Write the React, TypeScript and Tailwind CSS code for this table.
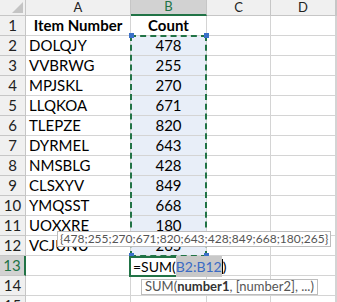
const rows: [string, number][] = [
  ['DOLQJY', 478],
  ['VVBRWG', 255],
  ['MPJSKL', 270],
  ['LLQKOA', 671],
  ['TLEPZE', 820],
  ['DYRMEL', 643],
  ['NMSBLG', 428],
  ['CLSXYV', 849],
  ['YMQSST', 668],
  ['UOXXRE', 180],
  ['VCJUNU', 265]
];

const cell = 'border-r border-b border-[#d4d4d4] overflow-hidden whitespace-nowrap';
const head = 'border-r border-b border-[#c6c6c6] bg-[#f0f0f0] flex items-center justify-center text-[13px] text-[#222]';

function RowHead({ n, active }: { n: number; active?: boolean }) {
  if (active) {
    return (
      <div className="flex items-center justify-center border-b border-r-2 border-b-[#c6c6c6] border-r-[#217346] bg-[#d2d2d2] text-[15px] text-[#217346]">
        {n}
      </div>
    );
  }
  return <div className={`${head} !text-[15px]`}>{n}</div>;
}

export default function App() {
  return (
    <div className="relative h-[302px] w-[337px] overflow-hidden bg-white font-['Lato',sans-serif] text-black">
      <div className="grid grid-cols-[26px_105px_76px_64px_65px_1fr] grid-rows-[16px_repeat(15,20px)]">
        {/* column headers */}
        <div className={`${head} relative`}>
          <div className="absolute bottom-[2px] right-[2px] h-0 w-0 border-b-[11px] border-l-[11px] border-b-[#c4c4c4] border-l-transparent" />
        </div>
        <div className={head}>A</div>
        <div className="flex items-center justify-center border-b-2 border-r border-b-[#217346] border-r-[#c6c6c6] bg-[#d2d2d2] text-[13px] text-[#217346]">
          B
        </div>
        <div className={head}>C</div>
        <div className={head}>D</div>
        <div className={head} />

        {/* row 1 */}
        <RowHead n={1} />
        <div className={`${cell} flex items-center justify-center text-[15px] font-bold`}>Item Number</div>
        <div className={`${cell} flex items-center justify-center text-[15px] font-bold`}>Count</div>
        <div className={cell} />
        <div className={cell} />
        <div className={cell} />

        {rows.map(([item, count], i) => (
          <div key={item} className="contents">
            <RowHead n={i + 2} />
            <div className={`${cell} flex items-center px-[3px] text-[15px]`}>{item}</div>
            <div className={`${cell} flex items-center justify-center bg-[#e8eef8] text-[15px]`}>{count}</div>
            <div className={cell} />
            <div className={cell} />
            <div className={cell} />
          </div>
        ))}

        {/* row 13 */}
        <RowHead n={13} active />
        <div className={cell} />
        <div className="relative border-b border-r border-[#d4d4d4]">
          <div className="absolute left-[2px] top-0 z-10 flex h-[20px] items-center whitespace-nowrap text-[14px]">
            <span>=SUM(</span>
            <span className="bg-[#c8c8c8] text-[#3b6bc4]">B2:B12</span>
            <span className="h-[15px] w-px bg-black" />
            <span>)</span>
          </div>
        </div>
        <div className={cell} />
        <div className={cell} />
        <div className={cell} />

        {[14, 15].map((n) => (
          <div key={n} className="contents">
            <RowHead n={n} />
            <div className={cell} />
            <div className={cell} />
            <div className={cell} />
            <div className={cell} />
            <div className={cell} />
          </div>
        ))}
      </div>

      {/* copy range marching ants */}
      <div className="absolute left-[130px] top-[35px] h-[222px] w-[77px] border-2 border-dashed border-[#217346]" />
      <div className="absolute left-[129px] top-[33px] h-[5px] w-[5px] bg-[#3a70c8]" />
      <div className="absolute left-[204px] top-[33px] h-[5px] w-[5px] bg-[#3a70c8]" />
      <div className="absolute left-[129px] top-[253px] h-[5px] w-[5px] bg-[#3a70c8]" />
      <div className="absolute left-[204px] top-[253px] h-[5px] w-[5px] bg-[#3a70c8]" />

      {/* active cell */}
      <div className="absolute left-[129px] top-[256px] h-[21px] w-[80px] border-2 border-[#217346]" />

      {/* array value tip */}
      <div className="absolute left-[57px] top-[231px] flex h-[16px] items-center border border-[#bdbdbd] bg-white px-[2px] text-[12px] text-[#555]">
        {'{478;255;270;671;820;643;428;849;668;180;265}'}
      </div>

      {/* function tip */}
      <div className="absolute left-[141px] top-[279px] flex h-[16px] items-center border border-[#bdbdbd] bg-white px-[3px] text-[13px] text-[#555]">
        SUM(<b className="text-[#333]">number1</b>, [number2], ...)
      </div>
    </div>
  );
}
